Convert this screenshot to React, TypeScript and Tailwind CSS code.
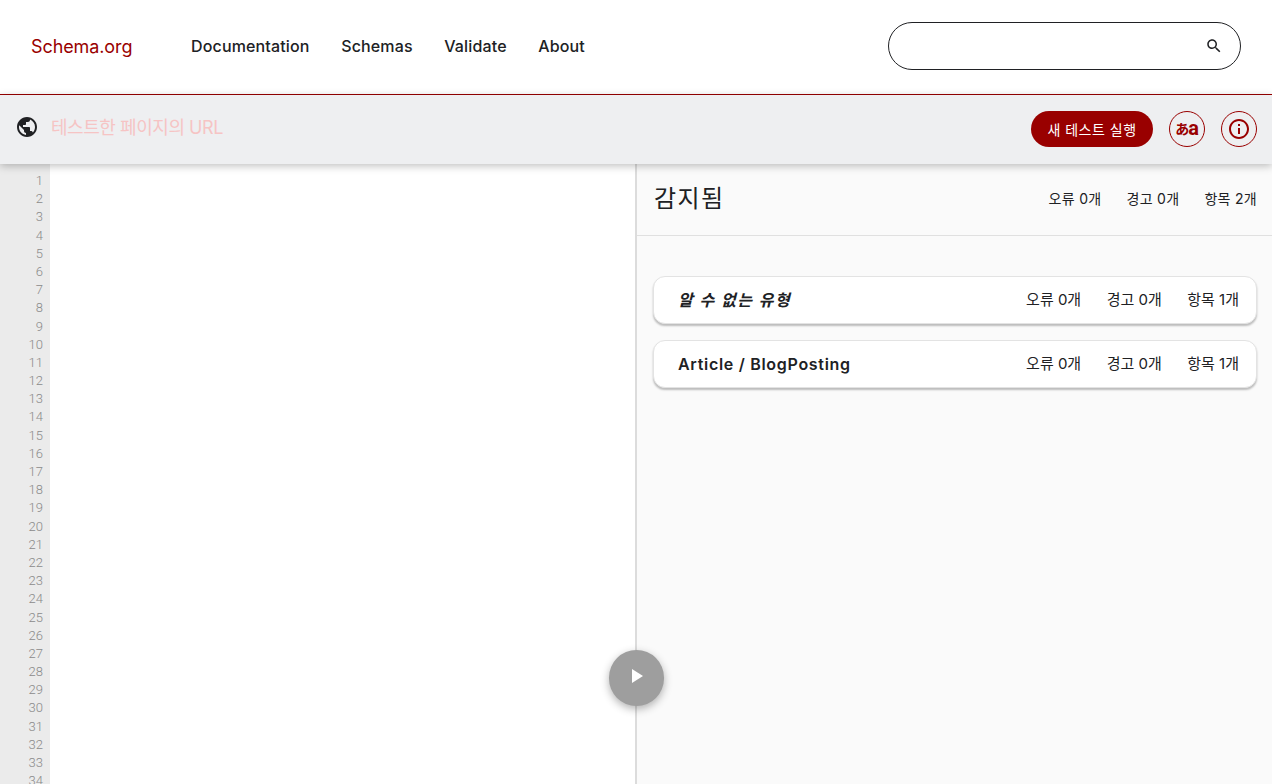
const sans = "font-['Inter','Noto_Sans_CJK_KR',sans-serif]";

function Counts({ items, style }: { items: string[]; style: string }) {
  return (
    <div className={`flex items-center ${style} text-[#202124]`}>
      {items.map((t) => (
        <span key={t}>{t}</span>
      ))}
    </div>
  );
}

function Card({ title, italic }: { title: string; italic?: boolean }) {
  return (
    <div className="flex h-[48px] items-center justify-between rounded-[12px] border border-[#e3e3e3] bg-white pl-[24px] pr-[17px] shadow-[0_2px_2px_rgba(0,0,0,0.25)]">
      <span className={`text-[16px] font-semibold text-[#202124] ${italic ? "italic tracking-[1.4px]" : "tracking-[0.7px]"}`}>{title}</span>
      <Counts style="mt-[1px] gap-[25.5px] text-[15px]" items={["오류 0개", "경고 0개", "항목 1개"]} />
    </div>
  );
}

export default function App() {
  const lines = Array.from({ length: 34 }, (_, i) => i + 1);
  return (
    <div className={`relative flex h-[784px] w-full flex-col overflow-hidden bg-white ${sans}`}>
      <header className="flex h-[95px] shrink-0 items-center border-b border-[#990000] bg-white pb-[2px] pl-[31px] pr-[31px]">
        <span className="w-[160px] text-[18px] tracking-[-0.1px] text-[#990000]">Schema.org</span>
        <nav className="flex items-center gap-[31.5px] text-[16px] font-medium tracking-[0.15px] text-[#202124]">
          <span>Documentation</span>
          <span>Schemas</span>
          <span>Validate</span>
          <span>About</span>
        </nav>
        <div className="ml-auto flex h-[48px] w-[353px] items-center justify-end rounded-[24px] border border-[#202124] pr-[17px]">
          <svg viewBox="0 0 24 24" className="h-[18px] w-[18px] fill-[#202124]">
            <path d="M15.5 14h-.79l-.28-.27C15.41 12.59 16 11.11 16 9.5 16 5.91 13.09 3 9.5 3S3 5.91 3 9.5 5.91 16 9.5 16c1.61 0 3.09-.59 4.23-1.57l.27.28v.79l5 4.99L20.49 19l-4.99-5zm-6 0C7.01 14 5 11.99 5 9.5S7.01 5 9.5 5 14 7.01 14 9.5 11.99 14 9.5 14z" />
          </svg>
        </div>
      </header>

      <div className="relative z-10 flex h-[69px] shrink-0 items-center bg-[#eeeff1] pb-[1px] pl-[15px] pr-[15px] shadow-[0_2px_8px_rgba(0,0,0,0.25)]">
        <div className="mb-[4px] flex items-center">
          <svg viewBox="0 0 24 24" className="h-[24px] w-[24px] fill-[#202124]">
            <path d="M12 2C6.48 2 2 6.48 2 12s4.48 10 10 10 10-4.48 10-10S17.52 2 12 2zm-1 17.93c-3.95-.49-7-3.85-7-7.93 0-.62.08-1.21.21-1.79L9 15v1c0 1.1.9 2 2 2v1.93zm6.9-2.54c-.26-.81-1-1.39-1.9-1.39h-1v-3c0-.55-.45-1-1-1H8v-2h2c.55 0 1-.45 1-1V7h2c1.1 0 2-.9 2-2v-.41c2.93 1.19 5 4.06 5 7.41 0 2.08-.8 3.97-2.1 5.39z" />
          </svg>
          <span className="ml-[12px] text-[18px] tracking-[-0.45px] text-[#f6c4c4]">테스트한 페이지의 URL</span>
        </div>
        <div className="ml-auto flex items-center gap-[16px]">
          <div className="flex h-[36px] w-[122px] items-center justify-center rounded-[18px] bg-[#990000] text-[14px] tracking-[0.5px] text-white">
            새 테스트 실행
          </div>
          <div className="flex h-[36px] w-[36px] items-center justify-center rounded-full border border-[#990000] pb-[2px] text-[#990000]">
            <span className="font-['Noto_Sans_CJK_JP',sans-serif] text-[14px] font-bold leading-none tracking-[-1px]">あ</span>
            <span className="font-['Roboto',sans-serif] text-[20px] font-bold leading-none">a</span>
          </div>
          <div className="flex h-[36px] w-[36px] items-center justify-center rounded-full border border-[#990000]">
            <svg viewBox="0 0 24 24" className="h-[24px] w-[24px] fill-[#990000]">
              <path d="M11 7h2v2h-2zm0 4h2v6h-2zm1-9C6.48 2 2 6.48 2 12s4.48 10 10 10 10-4.48 10-10S17.52 2 12 2zm0 18c-4.41 0-8-3.59-8-8s3.59-8 8-8 8 3.59 8 8-3.59 8-8 8z" />
            </svg>
          </div>
        </div>
      </div>

      <div className="flex min-h-0 flex-1">
        <div className="flex w-[637px] shrink-0 overflow-hidden border-r-2 border-[#dcdcdc] bg-white">
          <div className="w-[50px] shrink-0 bg-[#ebebeb] pr-[7px] pt-[8px] text-right font-['Roboto',sans-serif] text-[13px] font-light leading-[18.18px] text-[#8a8a8a]">
            {lines.map((n) => (
              <div key={n}>{n}</div>
            ))}
          </div>
        </div>
        <div className="min-w-0 flex-1 bg-[#fafafa]">
          <div className="flex h-[72px] items-center justify-between border-b border-[#e0e0e0] pl-[17px] pr-[15px]">
            <span className="mb-[2px] text-[24px] tracking-[1.4px] text-[#202124]">감지됨</span>
            <Counts style="mb-[2px] gap-[25px] text-[14px] tracking-[0.3px]" items={["오류 0개", "경고 0개", "항목 2개"]} />
          </div>
          <div className="flex flex-col gap-[16px] pl-[16px] pr-[15px] pt-[40px]">
            <Card title="알 수 없는 유형" italic />
            <Card title="Article / BlogPosting" />
          </div>
        </div>
      </div>

      <div className="absolute left-[609px] top-[650px] z-20 flex h-[56px] w-[55px] items-center justify-center rounded-full bg-[#9e9e9e] shadow-[0_3px_8px_rgba(0,0,0,0.3)]">
        <svg viewBox="0 0 24 24" className="mb-[4px] mr-[2px] h-[24px] w-[24px] fill-white">
          <path d="M8 5v14l11-7z" />
        </svg>
      </div>
    </div>
  );
}
